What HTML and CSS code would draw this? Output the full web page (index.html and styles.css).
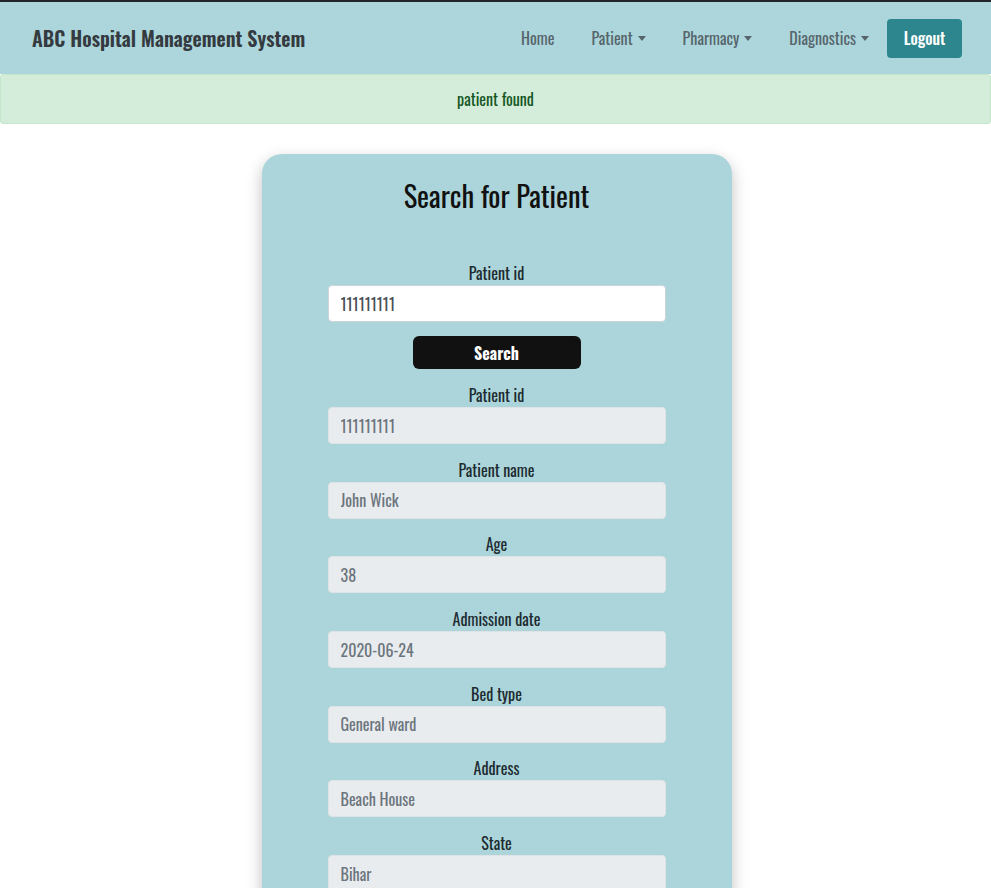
FILE: index.html
```html
<!DOCTYPE html>
<html>
<head>
<meta charset="utf-8">
<link rel="stylesheet" href="styles.css">
</head>
<body>
<nav class="navbar">
  <span class="brand">ABC Hospital Management System</span>
  <ul class="nav">
    <li class="nav-link">Home</li>
    <li class="nav-link">Patient <span class="caret"></span></li>
    <li class="nav-link">Pharmacy <span class="caret"></span></li>
    <li class="nav-link">Diagnostics<span class="caret"></span></li>
    <li><button class="logout">Logout</button></li>
  </ul>
</nav>
<div class="alert">patient found</div>
<main class="page">
  <section class="card">
    <h2 class="title">Search for Patient</h2>
    <form class="form">
      <div class="group">
        <label class="label">Patient id</label>
        <input class="input" value="111111111">
      </div>
      <button type="button" class="search">Search</button>
      <div class="group">
        <label class="label">Patient id</label>
        <input class="input ro" value="111111111" readonly>
      </div>
      <div class="group">
        <label class="label">Patient name</label>
        <input class="input ro" value="John Wick" readonly>
      </div>
      <div class="group">
        <label class="label">Age</label>
        <input class="input ro" value="38" readonly>
      </div>
      <div class="group">
        <label class="label">Admission date</label>
        <input class="input ro" value="2020-06-24" readonly>
      </div>
      <div class="group">
        <label class="label">Bed type</label>
        <input class="input ro" value="General ward" readonly>
      </div>
      <div class="group">
        <label class="label">Address</label>
        <input class="input ro" value="Beach House" readonly>
      </div>
      <div class="group">
        <label class="label">State</label>
        <input class="input ro" value="Bihar" readonly>
      </div>
    </form>
  </section>
</main>
</body>
</html>
```
FILE: styles.css
```css
* { box-sizing: border-box; }
html, body { margin: 0; padding: 0; }
body {
  font-family: "Oswald", "Liberation Sans", sans-serif;
  background: #fff;
  color: #212529;
  border-top: 2px solid #23272b;
}
.navbar {
  background: #acd6db;
  height: 72px;
  display: flex;
  align-items: center;
  justify-content: space-between;
  padding: 0 29px 0 32px;
}
.brand {
  font-size: 20px;
  font-weight: 600;
  color: #343a40;
}
.nav {
  list-style: none;
  margin: 0;
  padding: 0;
  display: flex;
  align-items: center;
}
.nav-link {
  font-size: 16px;
  font-weight: 400;
  color: #56656c;
  padding: 0 8px;
  margin-left: 21px;
  display: flex;
  align-items: center;
}
.caret {
  display: inline-block;
  width: 0;
  height: 0;
  border-left: 4.5px solid transparent;
  border-right: 4.5px solid transparent;
  border-top: 5px solid #56656c;
  margin-left: 5px;
}
.logout {
  margin-left: 10px;
  background: #2d858d;
  color: #fff;
  border: 0;
  border-radius: 4px;
  width: 75px;
  height: 39px;
  font-family: inherit;
  font-size: 16px;
  font-weight: 500;
}
.alert {
  background: #d4edda;
  border: 1px solid #c3e6cb;
  border-radius: 3px;
  color: #155724;
  height: 50px;
  display: flex;
  align-items: center;
  justify-content: center;
  font-size: 16px;
}
.page {
  display: flex;
  justify-content: center;
  padding-top: 30px;
  padding-left: 2px;
}
.card {
  width: 470px;
  background: #abd5da;
  border-radius: 20px;
  box-shadow: 0 6px 16px rgba(0,0,0,0.25);
  padding: 22px 0 40px;
}
.title {
  margin: 0;
  text-align: center;
  font-size: 28.5px;
  font-weight: 400;
  color: #111;
  line-height: 38px;
}
.form {
  margin-top: 47px;
  display: flex;
  flex-direction: column;
  align-items: center;
}
.group {
  display: flex;
  flex-direction: column;
  align-items: center;
  width: 338px;
  margin-bottom: 13.7px;
}
.group:first-child {
  margin-bottom: 14px;
}
.label {
  font-size: 16px;
  line-height: 24px;
  color: #1d2a30;
}
.input {
  width: 338px;
  height: 37px;
  border: 1px solid #ced4da;
  border-radius: 4px;
  background: #fff;
  padding: 0 12px;
  font-family: inherit;
  font-size: 16px;
  color: #495057;
}
.input.ro {
  background: #e9ecef;
  color: #6c757d;
  border-color: #dfe3e6;
}
.search {
  width: 168px;
  height: 33px;
  background: #111;
  color: #fff;
  border: 0;
  border-radius: 6px;
  font-family: inherit;
  font-size: 16px;
  font-weight: 700;
  margin-bottom: 14px;
}
```
